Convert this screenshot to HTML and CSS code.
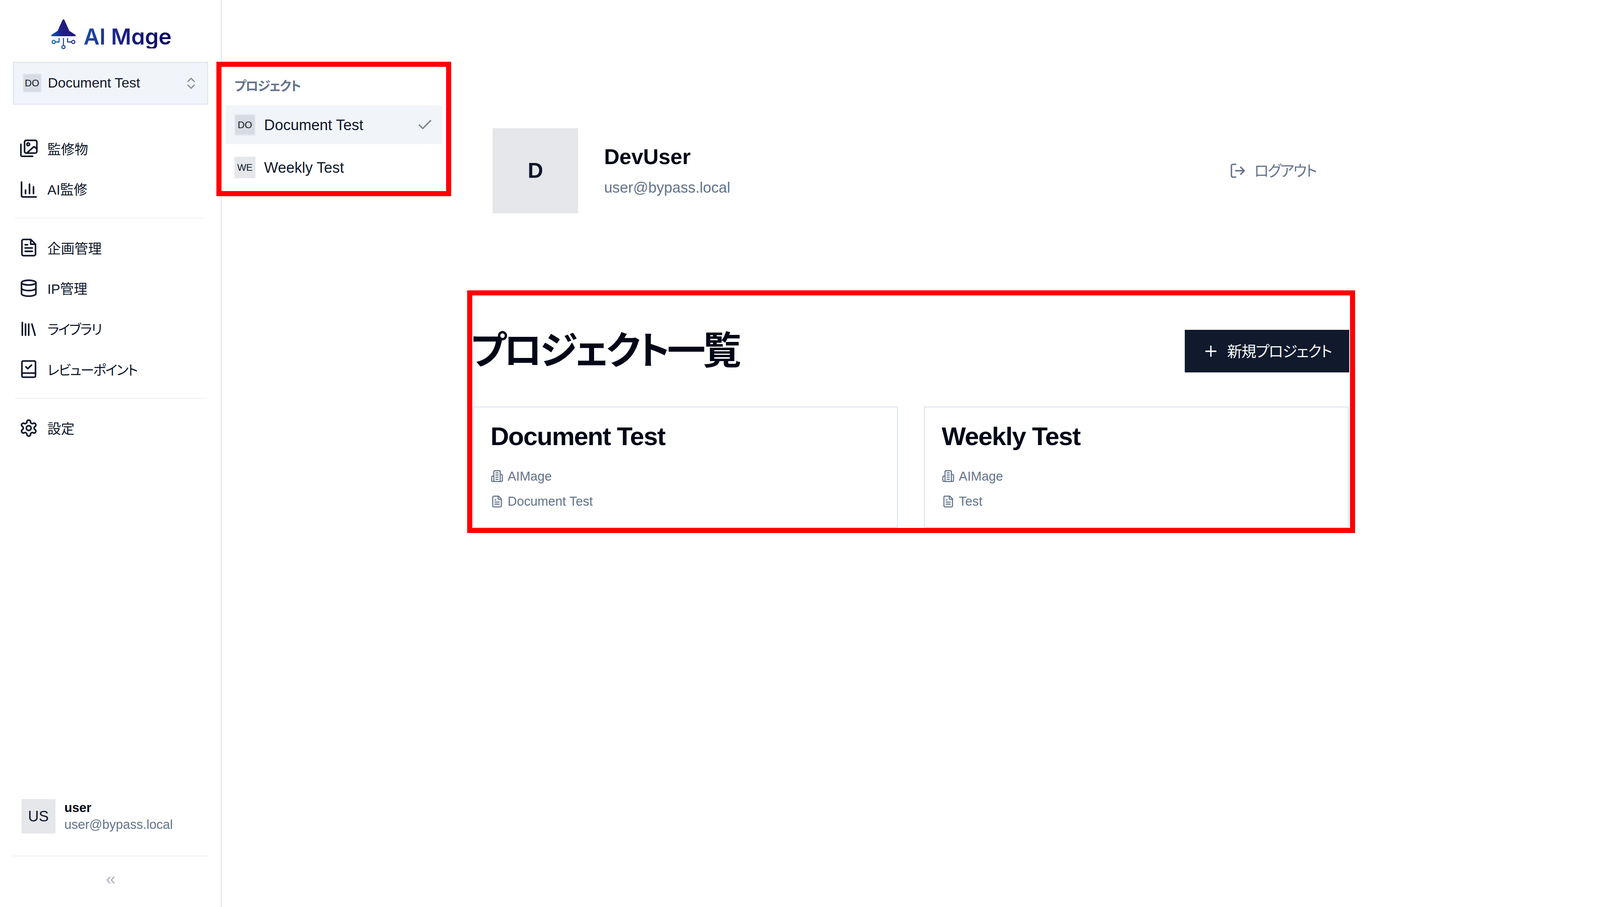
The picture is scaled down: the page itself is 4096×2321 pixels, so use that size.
FILE: index.html
```html
<!DOCTYPE html>
<html lang="ja">
<head>
<meta charset="utf-8">
<title>AI Mage</title>
<link rel="stylesheet" href="styles.css">
</head>
<body>
<svg class="defs" width="0" height="0" aria-hidden="true">
  <defs>
    <linearGradient id="hat" gradientUnits="userSpaceOnUse" x1="0" y1="40" x2="50" y2="30">
      <stop offset="0" stop-color="#0b5cb0"/><stop offset="0.55" stop-color="#1e2086"/><stop offset="1" stop-color="#221a7c"/>
    </linearGradient>
    <linearGradient id="circuit" gradientUnits="userSpaceOnUse" x1="0" y1="64" x2="69" y2="64">
      <stop offset="0" stop-color="#0b6cc0"/><stop offset="1" stop-color="#2a2a8a"/>
    </linearGradient>
  </defs>
</svg>
<aside class="sidebar">
  <div class="logo">
    <svg class="logo-mark" viewBox="0 0 69 84">
      <path fill="url(#hat)" d="M32 2 Q34.5 -1 37 2 L51 33 L68 44 Q70 48 67 48 H2 Q-1 48 1 44 L18 33 Z"/>
      <g fill="none" stroke="url(#circuit)" stroke-width="3">
        <path d="M34.5 53V74"/>
        <circle cx="34.5" cy="78.5" r="4.5"/>
        <circle cx="7" cy="64" r="4.5"/>
        <path d="M11.5 64H22V53"/>
        <circle cx="62" cy="64" r="4.5"/>
        <path d="M57.5 64H46V53"/>
      </g>
    </svg>
    <span class="logo-text">AI Mage</span>
  </div>
  <div class="selector">
    <span class="avatar avatar-active avatar-sm">DO</span>
    <span class="selector-name">Document Test</span>
    <svg class="ico selector-chev" viewBox="0 0 24 24"><path d="m7 15 5 5 5-5"/><path d="m7 9 5-5 5 5"/></svg>
  </div>
  <nav class="nav">
    <a class="nav-item">
      <svg class="ico nav-ico" viewBox="0 0 24 24"><rect x="6.8" y="2" width="15.4" height="16" rx="2"/><circle cx="11.4" cy="7" r="1.7"/><path d="M9.5 18l8.3-7.4a1.5 1.5 0 0 1 2 0l2.4 2.2"/><path d="M2.2 7v13.5A1.5 1.5 0 0 0 3.700 22H17"/></svg>
      <span>監修物</span>
    </a>
    <a class="nav-item">
      <svg class="ico nav-ico" viewBox="0 0 24 24"><path d="M3 3.400V20.500A1.500 1.500 0 0 0 4.500 22H21.400"/><path d="M8 13.500v4.300"/><path d="M13 6v11.800"/><path d="M18 9.300v8.500"/></svg>
      <span>AI監修</span>
    </a>
    <div class="rule"></div>
    <a class="nav-item">
      <svg class="ico nav-ico" viewBox="0 0 24 24"><path d="M14.500 1.800H5.500a2 2 0 0 0-2 2v16.400a2 2 0 0 0 2 2h13a2 2 0 0 0 2-2V7.800z"/><path d="M14.500 1.800v6h6"/><path d="M7.500 8.500h3"/><path d="M7.500 12.500h9"/><path d="M7.500 16.700h9"/></svg>
      <span>企画管理</span>
    </a>
    <a class="nav-item">
      <svg class="ico nav-ico" viewBox="0 0 24 24"><ellipse cx="12" cy="5" rx="9" ry="3"/><path d="M3 5V19A9 3 0 0 0 21 19V5"/><path d="M3 12A9 3 0 0 0 21 12"/></svg>
      <span>IP管理</span>
    </a>
    <a class="nav-item">
      <svg class="ico nav-ico" viewBox="0 0 24 24"><path d="m16 6 4 14"/><path d="M12 6v14"/><path d="M8 6v14"/><path d="M4 4v16"/></svg>
      <span class="kana">ライブラリ</span>
    </a>
    <a class="nav-item">
      <svg class="ico nav-ico" viewBox="0 0 24 24"><rect x="3.500" y="1.800" width="17" height="20.400" rx="1.500"/><path d="M3.500 17h17"/><path d="m8.500 9.300 2.300 2.200 4.700-4.500"/></svg>
      <span class="kana">レビューポイント</span>
    </a>
    <div class="rule"></div>
    <a class="nav-item">
      <svg class="ico nav-ico" viewBox="0 0 24 24"><path d="M12.220 2h-.44a2 2 0 0 0-2 2v.18a2 2 0 0 1-1 1.730l-.43.25a2 2 0 0 1-2 0l-.15-.08a2 2 0 0 0-2.730.73l-.22.38a2 2 0 0 0 .73 2.730l.15.1a2 2 0 0 1 1 1.720v.51a2 2 0 0 1-1 1.740l-.15.09a2 2 0 0 0-.73 2.730l.22.38a2 2 0 0 0 2.730.73l.15-.08a2 2 0 0 1 2 0l.43.25a2 2 0 0 1 1 1.730V20a2 2 0 0 0 2 2h.44a2 2 0 0 0 2-2v-.18a2 2 0 0 1 1-1.730l.43-.25a2 2 0 0 1 2 0l.15.08a2 2 0 0 0 2.730-.73l.22-.39a2 2 0 0 0-.73-2.730l-.15-.08a2 2 0 0 1-1-1.740v-.5a2 2 0 0 1 1-1.740l.15-.09a2 2 0 0 0 .73-2.730l-.22-.38a2 2 0 0 0-2.730-.73l-.15.08a2 2 0 0 1-2 0l-.43-.25a2 2 0 0 1-1-1.730V4a2 2 0 0 0-2-2z"/><circle cx="12" cy="12" r="3"/></svg>
      <span>設定</span>
    </a>
  </nav>
  <div class="side-user">
    <span class="avatar avatar-user">US</span>
    <div class="side-user-text">
      <div class="side-user-name">user</div>
      <div class="side-user-mail">user@bypass.local</div>
    </div>
  </div>
  <div class="collapse">
    <svg class="collapse-ico" viewBox="0 0 22 19"><path d="M10 1.500 3 9.500l7 8"/><path d="M20 1.500l-7 8 7 8"/></svg>
  </div>
</aside>

<main class="main">
  <section class="profile">
    <div class="profile-avatar">D</div>
    <div class="profile-text">
      <div class="profile-name">DevUser</div>
      <div class="profile-mail">user@bypass.local</div>
    </div>
    <a class="logout">
      <svg class="ico logout-ico" viewBox="0 0 24 24"><path d="M9 21H5a2 2 0 0 1-2-2V5a2 2 0 0 1 2-2h4"/><path d="m16 17 5-5-5-5"/><path d="M21 12H9"/></svg>
      <span class="kana logout-text">ログアウト</span>
    </a>
  </section>
  <section class="head">
    <h1 class="title">プロジェクト一覧</h1>
    <button class="new-btn">
      <svg class="ico plus-ico" viewBox="0 0 24 24"><path d="M5 12h14"/><path d="M12 5v14"/></svg>
      <span class="new-btn-text">新規プロジェクト</span>
    </button>
  </section>
  <section class="cards">
    <article class="card">
      <h2 class="card-title">Document Test</h2>
      <div class="meta">
        <svg class="ico meta-ico" viewBox="0 0 24 24"><path d="M6 22V4a2 2 0 0 1 2-2h8a2 2 0 0 1 2 2v18Z"/><path d="M6 12H4a2 2 0 0 0-2 2v6a2 2 0 0 0 2 2h2"/><path d="M18 9h2a2 2 0 0 1 2 2v9a2 2 0 0 1-2 2h-2"/><path d="M10 6h4"/><path d="M10 10h4"/><path d="M10 14h4"/><path d="M10 18h4"/></svg>
        <span>AIMage</span>
      </div>
      <div class="meta">
        <svg class="ico meta-ico" viewBox="0 0 24 24"><path d="M15 2H6a2 2 0 0 0-2 2v16a2 2 0 0 0 2 2h12a2 2 0 0 0 2-2V7Z"/><path d="M14 2v4a2 2 0 0 0 2 2h4"/><path d="M8 9h2"/><path d="M8 13h8"/><path d="M8 17h8"/></svg>
        <span>Document Test</span>
      </div>
    </article>
    <article class="card">
      <h2 class="card-title">Weekly Test</h2>
      <div class="meta">
        <svg class="ico meta-ico" viewBox="0 0 24 24"><path d="M6 22V4a2 2 0 0 1 2-2h8a2 2 0 0 1 2 2v18Z"/><path d="M6 12H4a2 2 0 0 0-2 2v6a2 2 0 0 0 2 2h2"/><path d="M18 9h2a2 2 0 0 1 2 2v9a2 2 0 0 1-2 2h-2"/><path d="M10 6h4"/><path d="M10 10h4"/><path d="M10 14h4"/><path d="M10 18h4"/></svg>
        <span>AIMage</span>
      </div>
      <div class="meta">
        <svg class="ico meta-ico" viewBox="0 0 24 24"><path d="M15 2H6a2 2 0 0 0-2 2v16a2 2 0 0 0 2 2h12a2 2 0 0 0 2-2V7Z"/><path d="M14 2v4a2 2 0 0 0 2 2h4"/><path d="M8 9h2"/><path d="M8 13h8"/><path d="M8 17h8"/></svg>
        <span>Test</span>
      </div>
    </article>
  </section>
</main>

<div class="popup">
  <div class="popup-label">プロジェクト</div>
  <div class="popup-row popup-row-active">
    <span class="avatar avatar-active avatar-lg">DO</span>
    <span class="popup-name">Document Test</span>
    <svg class="ico popup-check" viewBox="0 0 24 24"><path d="M20 6 9 17l-5-5"/></svg>
  </div>
  <div class="popup-row">
    <span class="avatar avatar-lg">WE</span>
    <span class="popup-name">Weekly Test</span>
  </div>
</div>
<div class="annotation"></div>
</body>
</html>
```
FILE: styles.css
```css
* { box-sizing: border-box; }
html, body { margin: 0; padding: 0; }
body {
  width: 4096px;
  height: 2321px;
  display: flex;
  position: relative;
  overflow: hidden;
  background: #fff;
  color: #0f172a;
  font-family: "Liberation Sans", "Noto Sans CJK JP", sans-serif;
  font-feature-settings: "palt";
}
.defs { position: absolute; }
.kana { letter-spacing: -0.065em; }
.ico {
  fill: none;
  stroke: currentColor;
  stroke-width: 2;
  stroke-linecap: round;
  stroke-linejoin: round;
  flex: none;
}

/* Sidebar */
.sidebar {
  width: 568px;
  height: 2321px;
  flex: none;
  display: flex;
  flex-direction: column;
  padding: 0 33px;
  border-right: 3px solid #e2e8f0;
}
.logo {
  height: 158.4px;
  display: flex;
  align-items: flex-start;
  padding: 49px 0 0 98px;
  gap: 20px;
}
.logo-mark { width: 63px; height: 76.500px; flex: none; }
.logo-text {
  font-family: Inter, "Liberation Sans", sans-serif;
  font-feature-settings: "cv11";
  font-weight: 600;
  font-size: 56px;
  line-height: 60px;
  margin-top: 15px;
  white-space: pre;
  background: linear-gradient(90deg, #1a4ba8, #1b1f85 45%, #07065e);
  -webkit-background-clip: text;
  background-clip: text;
  color: transparent;
}
.selector {
  height: 109.200px;
  width: 500px;
  display: flex;
  align-items: center;
  padding: 0 21.500px 0 21.500px;
  background: #f1f5f9;
  border: 3px solid #e2e8f0;
}
.avatar {
  display: flex;
  align-items: center;
  justify-content: center;
  flex: none;
  background: #e5e7eb;
  font-size: 24.600px;
  color: #0f172a;
}
.avatar-sm { width: 49px; height: 49px; }
.avatar-lg { width: 54.600px; height: 54.600px; }
.avatar-active { background: #d8dbe1; border: 3px solid #e2e8f0; }
.selector-name { margin-left: 16px; font-size: 35.500px; flex: 1; }
.selector-chev { width: 38.400px; height: 38.400px; color: #8c9098; }

.nav { display: flex; flex-direction: column; margin-top: 60.300px; }
.nav-item {
  height: 103.700px;
  display: flex;
  align-items: center;
  padding-left: 16.200px;
  gap: 23px;
  font-size: 34.800px;
}
.nav-ico { width: 49px; height: 49px; }
.rule {
  width: 490px;
  height: 3px;
  background: #f5f5f5;
  margin: 21.800px 0 21.800px 5.400px;
}
.side-user {
  margin-top: auto;
  display: flex;
  align-items: center;
  padding-left: 21.600px;
  gap: 22.800px;
}
.avatar-user { width: 87.400px; height: 87.400px; font-size: 38.200px; }
.side-user-text { display: flex; flex-direction: column; gap: 5px; }
.side-user-name { font-size: 32.800px; font-weight: 700; line-height: 38px; color: #020617; }
.side-user-mail { font-size: 32.800px; line-height: 38px; color: #64748b; }
.collapse {
  margin-top: 56px;
  height: 132.500px;
  border-top: 3px solid #f5f5f5;
  display: flex;
  justify-content: center;
  padding-top: 50px;
}
.collapse-ico {
  width: 24px;
  height: 20px;
  fill: none;
  stroke: #b0b8c6;
  stroke-width: 3.200;
}

/* Main */
.main {
  flex: 1;
  padding: 327.700px 641.600px 0 641.700px;
  min-width: 0;
}
.profile {
  height: 218.500px;
  display: flex;
  align-items: center;
  padding: 0 84.800px 0 51.800px;
}
.profile-avatar {
  width: 218.500px;
  height: 218.500px;
  flex: none;
  background: #e5e7eb;
  display: flex;
  align-items: center;
  justify-content: center;
  font-size: 54.600px;
  font-weight: 700;
}
.profile-text { margin-left: 66.400px; display: flex; flex-direction: column; gap: 26px; }
.profile-name { font-size: 54.600px; line-height: 60px; font-weight: 700; color: #020617; }
.profile-mail { font-size: 38.200px; line-height: 44px; color: #64748b; }
.logout {
  margin-left: auto;
  display: flex;
  align-items: center;
  gap: 20px;
  font-size: 38.200px;
  color: #64748b;
}
.logout-text { padding-bottom: 4px; }
.logout-ico { width: 43.700px; height: 43.700px; }
.head {
  margin-top: 297.600px;
  height: 109.200px;
  display: flex;
  align-items: center;
  justify-content: space-between;
}
.title {
  margin: 0 0 0 -5px;
  font-size: 98.300px;
  line-height: 109px;
  font-weight: 700;
  letter-spacing: -0.07em;
  color: #020617;
}
.new-btn {
  height: 109.200px;
  padding: 0 45.500px 0 44.500px;
  border: 0;
  border-radius: 0;
  background: #111a2c;
  color: #f8fafc;
  display: flex;
  align-items: center;
  gap: 20px;
  font-family: inherit;
  font-feature-settings: inherit;
  font-size: 38.200px;
}
.new-btn-text { letter-spacing: -0.045em; padding-bottom: 4px; }
.plus-ico { width: 43.700px; height: 43.700px; }
.cards {
  margin-top: 87.400px;
  display: grid;
  grid-template-columns: 1fr 1fr;
  gap: 65.500px;
}
.card {
  height: 310.400px;
  border: 3px solid #e2e8f0;
  padding: 38.400px 43px 0;
}
.card-title {
  margin: 0 0 47px;
  font-size: 65.500px;
  line-height: 70px;
  letter-spacing: -1.640px;
  font-weight: 700;
  color: #020617;
}
.meta {
  height: 40px;
  margin-bottom: 24.600px;
  display: flex;
  align-items: center;
  gap: 11px;
  font-size: 32.800px;
  color: #64748b;
}
.meta-ico { width: 32.800px; height: 32.800px; }

/* Popup menu over the sidebar edge */
.popup {
  position: absolute;
  left: 554.300px;
  top: 158.400px;
  width: 600.700px;
  height: 344px;
  background: #fff;
  border: 13.700px solid #ff0000;
  padding: 0 10.700px;
}
.popup-label {
  height: 99px;
  padding: 30px 0 0 22px;
  font-size: 32.800px;
  line-height: 40px;
  font-weight: 700;
  letter-spacing: -0.065em;
  color: #64748b;
}
.popup-row {
  height: 98.300px;
  margin-bottom: 10.900px;
  display: flex;
  align-items: center;
  padding: 0 22px 0 21.700px;
  gap: 21.800px;
}
.popup-row-active { background: #f1f5f9; }
.popup-name { flex: 1; font-size: 38.200px; }
.popup-check { width: 43.500px; height: 43.500px; color: #7f8590; }

/* Red annotation frame */
.annotation {
  position: absolute;
  left: 1196px;
  top: 742.700px;
  width: 2273px;
  height: 621.700px;
  border: 13.700px solid #ff0000;
  pointer-events: none;
}
```
